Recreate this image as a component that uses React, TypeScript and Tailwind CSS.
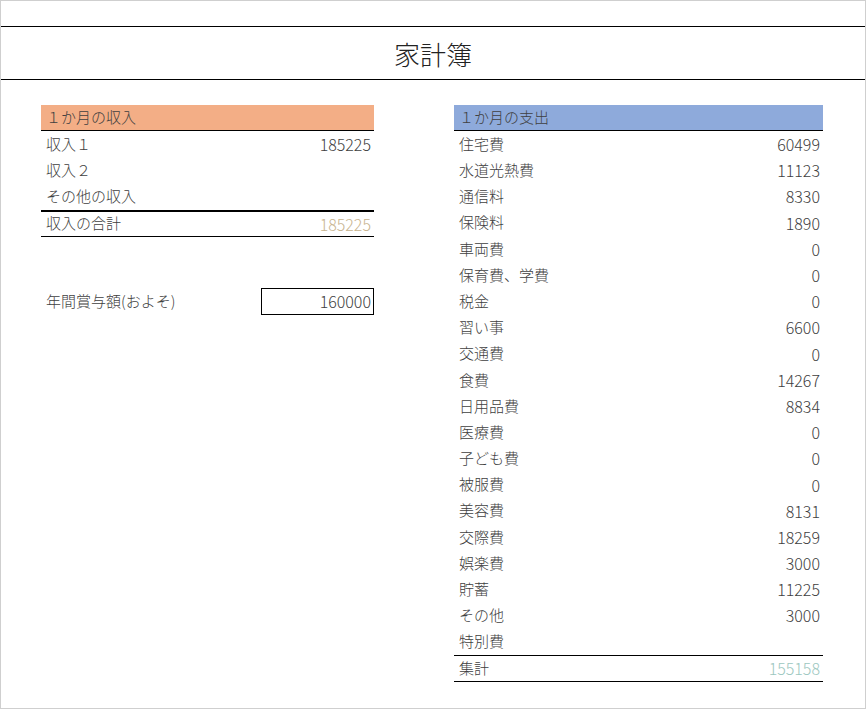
import React from "react";

const font = { fontFamily: '"Noto Sans CJK JP", "Noto Sans", sans-serif' };

const expenses: [string, string][] = [
  ["住宅費", "60499"], ["水道光熱費", "11123"], ["通信料", "8330"], ["保険料", "1890"],
  ["車両費", "0"], ["保育費、学費", "0"], ["税金", "0"], ["習い事", "6600"],
  ["交通費", "0"], ["食費", "14267"], ["日用品費", "8834"], ["医療費", "0"],
  ["子ども費", "0"], ["被服費", "0"], ["美容費", "8131"], ["交際費", "18259"],
  ["娯楽費", "3000"], ["貯蓄", "11225"], ["その他", "3000"], ["特別費", ""],
];

function Row({ label, value }: { label: string; value: string }) {
  return (
    <div className="flex h-[26.2px] items-center justify-between pl-[5px] pr-[3px]">
      <span>{label}</span>
      <span className="text-[16px]">{value}</span>
    </div>
  );
}

export default function App() {
  return (
    <div style={font} className="w-[866px] h-[709px] bg-white border border-[#cfcfcf] text-[15px] text-[#404040] font-light">
      <div className="h-[25px]" />
      <div className="h-[54px] border-y border-black flex items-center justify-center text-[26px] text-[#222]">家計簿</div>
      <div className="flex pt-[25px]">
        <div className="ml-[40px] w-[333px]">
          <div className="h-[26px] bg-[#f3ae86] border-b border-black flex items-center pl-[5px]">１か月の収入</div>
          <Row label="収入１" value="185225" />
          <Row label="収入２" value="" />
          <Row label="その他の収入" value="" />
          <div className="flex h-[27px] items-center justify-between pl-[5px] pr-[3px] border-t-2 border-b border-black">
            <span>収入の合計</span>
            <span className="text-[16px] text-[#c8b48f]">185225</span>
          </div>
          <div className="mt-[51px] flex h-[27px] items-center justify-between pl-[5px]">
            <span>年間賞与額(およそ)</span>
            <span className="w-[113px] h-[27px] border border-black flex items-center justify-end pr-[2px] text-[16px]">160000</span>
          </div>
        </div>
        <div className="ml-[80px] w-[369px]">
          <div className="h-[26px] bg-[#8eaadb] border-b border-black flex items-center pl-[5px]">１か月の支出</div>
          {expenses.map(([l, v]) => <Row key={l} label={l} value={v} />)}
          <div className="flex h-[27px] items-center justify-between pl-[5px] pr-[3px] border-y border-black">
            <span>集計</span>
            <span className="text-[16px] text-[#9cc7c0]">155158</span>
          </div>
        </div>
      </div>
    </div>
  );
}
